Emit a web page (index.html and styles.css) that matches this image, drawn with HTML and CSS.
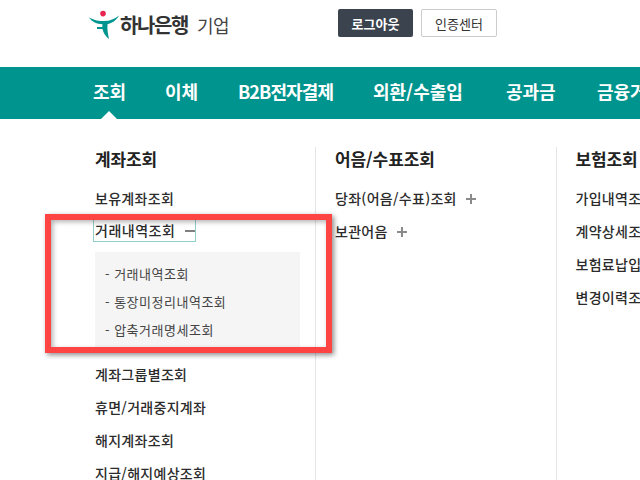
FILE: index.html
```html
<!DOCTYPE html>
<html lang="ko">
<head>
<meta charset="utf-8">
<title>하나은행 기업</title>
<link rel="stylesheet" href="styles.css">
</head>
<body>
<div class="page">
  <header class="top">
    <div class="logo">
      <svg class="logo-mark" width="31" height="29" viewBox="0 0 31 29">
        <circle cx="14" cy="3.6" r="2.8" fill="#e8254f"/>
        <path d="M0 7.5C6 10.5 10 11 15 11C21 11 26 9 30 5.5C27 11 22 13.5 18.5 14.2C18 19 19 24 20 29C15 25 12.5 19 13.5 14.2C8 14 3 12 0 7.5Z" fill="#00958f"/>
        <path d="M8 17H14.5V19H8Z" fill="#00958f"/>
      </svg>
      <span class="logo-name">하나은행</span>
      <span class="logo-sub">기업</span>
    </div>
    <div class="top-actions">
      <a class="btn btn-dark">로그아웃</a>
      <a class="btn btn-light">인증센터</a>
    </div>
  </header>
  <nav class="gnb">
    <a class="gnb-item gnb-active">조회</a>
    <a class="gnb-item">이체</a>
    <a class="gnb-item gnb-tight">B2B전자결제</a>
    <a class="gnb-item">외환/수출입</a>
    <a class="gnb-item">공과금</a>
    <a class="gnb-item">금융거래</a>
  </nav>
  <main class="menu">
    <section class="col">
      <h2 class="col-title">계좌조회</h2>
      <ul class="list">
        <li>보유계좌조회</li>
        <li class="open"><span class="focus">거래내역조회<i class="sign minus"></i></span>
          <ul class="sub">
            <li>- 거래내역조회</li>
            <li>- 통장미정리내역조회</li>
            <li>- 압축거래명세조회</li>
          </ul>
        </li>
        <li>계좌그룹별조회</li>
        <li>휴면/거래중지계좌</li>
        <li>해지계좌조회</li>
        <li>지급/해지예상조회</li>
      </ul>
    </section>
    <section class="col">
      <h2 class="col-title">어음/수표조회</h2>
      <ul class="list">
        <li>당좌(어음/수표)조회<i class="sign plus"></i></li>
        <li>보관어음<i class="sign plus"></i></li>
      </ul>
    </section>
    <section class="col">
      <h2 class="col-title">보험조회</h2>
      <ul class="list">
        <li>가입내역조회</li>
        <li>계약상세조회</li>
        <li>보험료납입조회</li>
        <li>변경이력조회</li>
      </ul>
    </section>
  </main>
  <div class="highlight"></div>
</div>
</body>
</html>
```
FILE: styles.css
```css
* { box-sizing: border-box; }
html, body { margin: 0; padding: 0; height: 100%; overflow: hidden; background: #fff; }
body { font-family: "Noto Sans CJK KR", "Noto Sans", sans-serif; color: #222; }
ul { list-style: none; margin: 0; padding: 0; }
.page { position: relative; width: 640px; height: 480px; overflow: hidden; }

.top { height: 67px; display: flex; align-items: flex-start; padding: 9px 0 0 89px; }
.logo { width: 249px; height: 30px; display: flex; align-items: center; }
.logo-mark { flex: none; }
.logo-name { font-size: 20px; font-weight: 700; letter-spacing: -1.4px; color: #333; line-height: 30px; margin-top: 2px; }
.logo-sub { font-size: 18px; font-weight: 400; letter-spacing: -0.6px; color: #444; line-height: 30px; margin: 2px 0 0 9px; }
.top-actions { display: flex; gap: 8px; }
.btn { height: 28px; width: 75px; display: flex; align-items: center; justify-content: center; font-size: 13px; border-radius: 2px; }
.btn-dark { background: #3a434e; color: #fff; font-weight: 700; }
.btn-light { width: 76px; background: #fff; border: 1px solid #ccc; color: #333; }

.gnb { height: 52px; background: #00948e; display: grid; grid-template-columns: 72px 73px 135px 133px 91px auto; padding-left: 93px; }
.gnb-item { position: relative; color: #fff; font-size: 18px; font-weight: 700; line-height: 49px; white-space: nowrap; }
.gnb-tight { letter-spacing: -0.9px; }
.gnb-active::after { content: ""; position: absolute; left: 8px; bottom: 0; width: 0; height: 0; border-left: 8px solid transparent; border-right: 8px solid transparent; border-bottom: 8px solid #fff; }

.menu { display: flex; padding-top: 28px; }
.col { flex: none; width: 240.5px; height: 400px; padding-left: 19px; border-right: 1px solid #e4e4e4; }
.col:first-child { width: 228px; margin-left: 88px; padding-left: 7px; }
.col-title { margin: -2px 0 9px; font-size: 17px; font-weight: 700; letter-spacing: -0.1px; line-height: 28px; color: #222; white-space: nowrap; }
.list > li { font-size: 14px; font-weight: 500; letter-spacing: 0.3px; line-height: 33px; color: #2b2b2b; white-space: nowrap; }
.list > .open { margin-top: -1px; }
.focus { display: block; height: 23px; line-height: 21px; width: 103px; margin: 5px 0 0 -2px; padding-left: 1px; border: 1px solid #8fd0cc; letter-spacing: 0.5px; }
.sign { display: inline-block; position: relative; width: 10px; height: 10px; margin-left: 10px; vertical-align: 0; }
.sign::before { content: ""; position: absolute; left: 0; right: 0; top: 4px; height: 2px; background: #808080; }
.plus { margin-left: 9px; }
.plus::before { background: #8a8a8a; }
.plus::after { content: ""; position: absolute; top: 0; bottom: 0; left: 4px; width: 2px; background: #8a8a8a; }
.sub { width: 205px; height: 98px; margin: 10px 0 8px; padding: 8px 0 0 10px; background: #f5f5f5; }
.sub li { font-size: 13px; font-weight: 400; letter-spacing: 0.5px; line-height: 28px; color: #444; }

.highlight { position: absolute; left: 45px; top: 214px; width: 287px; height: 139px; border: 6px solid #ff4444; box-shadow: 2px 2px 5px rgba(0,0,0,.45), inset 2px 2px 5px rgba(0,0,0,.3); }
```
